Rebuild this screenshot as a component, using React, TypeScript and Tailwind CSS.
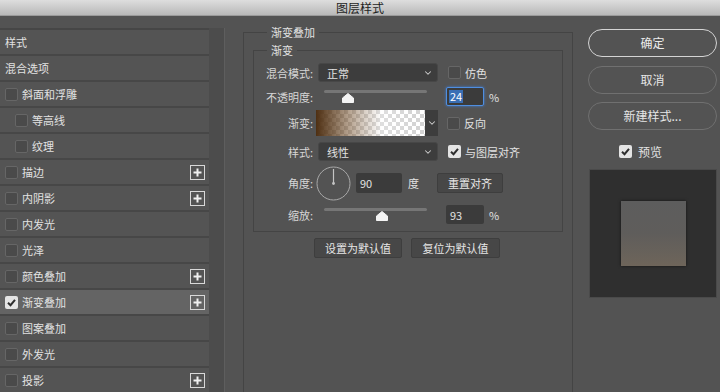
import { ChevronDown } from 'lucide-react';

const font = "font-['Noto_Sans_CJK_SC','Noto_Sans',sans-serif]";

function Box({ checked }: { checked?: boolean }) {
    if (checked) {
        return (
            <span className="flex h-[13px] w-[13px] shrink-0 items-center justify-center rounded-[2px] bg-[#e4e4e4]">
                <svg width="11" height="11" viewBox="0 0 11 11">
                    <path d="M2 5.8 L4.5 8.2 L9 2.8" stroke="#2e2e2e" strokeWidth="2" fill="none" />
                </svg>
            </span>
        );
    }
    return <span className="block h-[13px] w-[13px] shrink-0 rounded-[2px] border border-[#666] bg-[#4a4a4a]" />;
}

function PlusBox() {
    return (
        <svg width="15" height="15" viewBox="0 0 15 15" className="shrink-0">
            <rect x="0.5" y="0.5" width="14" height="14" fill="none" stroke="#d8d8d8" />
            <path d="M7.5 3.5 V11.5 M3.5 7.5 H11.5" stroke="#f0f0f0" strokeWidth="2" />
        </svg>
    );
}

const items: { label: string; box?: boolean; indent?: boolean; plus?: boolean; checked?: boolean }[] = [
    { label: '样式' },
    { label: '混合选项' },
    { label: '斜面和浮雕', box: true },
    { label: '等高线', box: true, indent: true },
    { label: '纹理', box: true, indent: true },
    { label: '描边', box: true, plus: true },
    { label: '内阴影', box: true, plus: true },
    { label: '内发光', box: true },
    { label: '光泽', box: true },
    { label: '颜色叠加', box: true, plus: true },
    { label: '渐变叠加', box: true, plus: true, checked: true },
    { label: '图案叠加', box: true },
    { label: '外发光', box: true },
    { label: '投影', box: true, plus: true },
];

function Select({ value }: { value: string }) {
    return (
        <div className="ml-[5px] flex h-[19px] w-[120px] items-center justify-between rounded-[3px] border border-[#474747] bg-[#3d3d3d] pl-[8px] pr-[4px]">
            <span>{value}</span>
            <ChevronDown size={10} strokeWidth={2.5} className="text-[#cfcfcf]" />
        </div>
    );
}

function Slider({ thumb }: { thumb: string }) {
    return (
        <div className="relative ml-[11px] h-[19px] w-[103px]">
            <div className="mt-[3px] h-[3px] w-full rounded-full bg-[#767676]" />
            {/* slider thumb */}
            <svg width="12" height="10" viewBox="0 0 12 10" className={`absolute top-[6px] ${thumb}`}>
                <path d="M6 0.5 L11.5 5 V9.5 H0.5 V5 Z" fill="#f4f4f4" stroke="#f4f4f4" strokeLinejoin="round" />
            </svg>
        </div>
    );
}

function Label({ children }: { children: string }) {
    return <span className="w-[59px] shrink-0 text-right text-[#d6d6d6]">{children}</span>;
}

function Btn({ children, className }: { children: string; className?: string }) {
    return (
        <button className={`flex h-[20px] items-center justify-center rounded-[2px] border border-[#3e3e3e] bg-[#474747] text-[#e6e6e6] ${className ?? ''}`}>
            {children}
        </button>
    );
}

export default function App() {
    return (
        <div className={`h-[392px] w-[720px] overflow-hidden bg-[#535353] text-[11px] leading-[16px] text-[#e2e2e2] ${font}`}>
            {/* Title bar */}
            <div className="flex h-[16px] items-center justify-center border-b border-[#9a9a9a] bg-gradient-to-b from-[#dedede] to-[#b8b8b8] text-[12px] leading-[14px] text-[#1e1e1e]">
                图层样式
            </div>

            <div className="flex">
                {/* Style list */}
                <div className="mt-[12px] flex">
                    <div className="w-[209px] border-t-2 border-[#464646]">
                        {items.map(it => (
                            <div
                                key={it.label}
                                className={`flex h-[26px] items-center border-b-2 border-[#474747] pr-[4px] ${it.checked ? 'bg-[#646464]' : 'bg-[#545454]'} ${it.indent ? 'pl-[15px]' : 'pl-[5px]'}`}
                            >
                                {it.box && <Box checked={it.checked} />}
                                <span className={it.box ? 'ml-[4px]' : ''}>{it.label}</span>
                                {it.plus && (
                                    <span className="ml-auto">
                                        <PlusBox />
                                    </span>
                                )}
                            </div>
                        ))}
                    </div>
                    <div className="h-[400px] w-[16px] border-r border-[#5e5e5e] bg-[#4c4c4c]" />
                </div>

                {/* Gradient overlay settings */}
                <fieldset className="ml-[18px] mt-[8px] h-[400px] w-[330px] border border-[#444] px-[9px] pt-[2px]">
                    <legend className="ml-[14px] px-[4px]">渐变叠加</legend>

                    <fieldset className="border border-[#444] pb-[7px] pt-[5px]">
                        <legend className="ml-[13px] px-[4px]">渐变</legend>

                        <div className="flex h-[19px] items-center">
                            <Label>混合模式:</Label>
                            <Select value="正常" />
                            <span className="ml-[10px]"><Box /></span>
                            <span className="ml-[4px]">仿色</span>
                        </div>

                        <div className="mt-[5px] flex h-[19px] items-center">
                            <Label>不透明度:</Label>
                            <Slider thumb="left-[18px]" />
                            <div className="ml-[19px] flex h-[19px] w-[38px] items-center rounded-[2px] border border-[#4f8ee0] bg-[#3b3b3b] pl-[2px] shadow-[0_0_3px_#3f7fd6]">
                                <span className="bg-[#3a6fb5] px-[1px] leading-[13px] text-white">24</span>
                            </div>
                            <span className="ml-[5px]">%</span>
                        </div>

                        <div className="mt-[4px] flex h-[26px] items-center">
                            <Label>渐变:</Label>
                            <div className="ml-[3px] flex h-[26px]">
                                <div className="h-[26px] w-[109px] bg-[repeating-conic-gradient(#d4d4d4_0%_25%,#ffffff_0%_50%)] bg-[length:8px_8px]">
                                    <div className="h-full w-full bg-[linear-gradient(to_right,#4e2f12,rgba(120,85,50,0.55)_30%,rgba(255,255,255,0.25)_60%,rgba(255,255,255,0)_90%)]" />
                                </div>
                                <div className="flex w-[13px] items-center justify-center bg-[#3d3d3d]">
                                    <ChevronDown size={10} strokeWidth={2.5} className="text-[#cfcfcf]" />
                                </div>
                            </div>
                            <span className="ml-[9px]"><Box /></span>
                            <span className="ml-[4px]">反向</span>
                        </div>

                        <div className="mt-[6px] flex h-[19px] items-center">
                            <Label>样式:</Label>
                            <Select value="线性" />
                            <span className="ml-[10px]"><Box checked /></span>
                            <span className="ml-[4px]">与图层对齐</span>
                        </div>

                        <div className="mt-[5px] flex h-[34px] items-center">
                            <Label>角度:</Label>
                            <svg width="35" height="35" viewBox="0 0 35 35" className="ml-[3px] shrink-0">
                                <circle cx="17.5" cy="17.5" r="16.5" fill="none" stroke="#a9a9a9" />
                                <path d="M17.5 17.5 V3" stroke="#c4c4c4" strokeWidth="1.2" />
                                <circle cx="17.5" cy="17.5" r="1.4" fill="#c4c4c4" />
                            </svg>
                            <div className="ml-[5px] flex h-[20px] w-[46px] items-center rounded-[2px] bg-[#3b3b3b] pl-[4px]">90</div>
                            <span className="ml-[6px]">度</span>
                            <Btn className="ml-[18px] w-[66px]">重置对齐</Btn>
                        </div>

                        <div className="mt-[5px] flex h-[19px] items-center">
                            <Label>缩放:</Label>
                            <Slider thumb="left-[52px]" />
                            <div className="ml-[19px] flex h-[19px] w-[38px] items-center rounded-[2px] bg-[#3b3b3b] pl-[4px]">93</div>
                            <span className="ml-[5px]">%</span>
                        </div>
                    </fieldset>

                    <div className="ml-[61px] mt-[6px] flex gap-[9px]">
                        <Btn className="w-[88px]">设置为默认值</Btn>
                        <Btn className="w-[89px]">复位为默认值</Btn>
                    </div>
                </fieldset>

                {/* Action column */}
                <div className="ml-[15px] flex w-[129px] flex-col pt-[13px] text-[12px]">
                    <button className="flex h-[28px] items-center justify-center rounded-full border-[1.5px] border-[#d4d4d4] text-[#ececec]">确定</button>
                    <button className="mt-[9px] flex h-[28px] items-center justify-center rounded-full border-[1.5px] border-[#707070] text-[#e6e6e6]">取消</button>
                    <button className="mt-[8px] flex h-[28px] items-center justify-center rounded-full border-[1.5px] border-[#707070] text-[#e6e6e6]">新建样式...</button>
                    <div className="ml-[31px] mt-[15px] flex h-[13px] items-center">
                        <Box checked />
                        <span className="ml-[6px]">预览</span>
                    </div>
                    <div className="ml-[1px] mt-[11px] flex h-[129px] w-[128px] items-center justify-center border border-[#4a4a4a] bg-[#2f2f2f]">
                        <div className="h-[65px] w-[65px] bg-gradient-to-b from-[#5d5d5d] via-[#5f5d5b] to-[#6e655a] shadow-[0_0_3px_rgba(0,0,0,0.6)]" />
                    </div>
                </div>
            </div>
        </div>
    );
}
